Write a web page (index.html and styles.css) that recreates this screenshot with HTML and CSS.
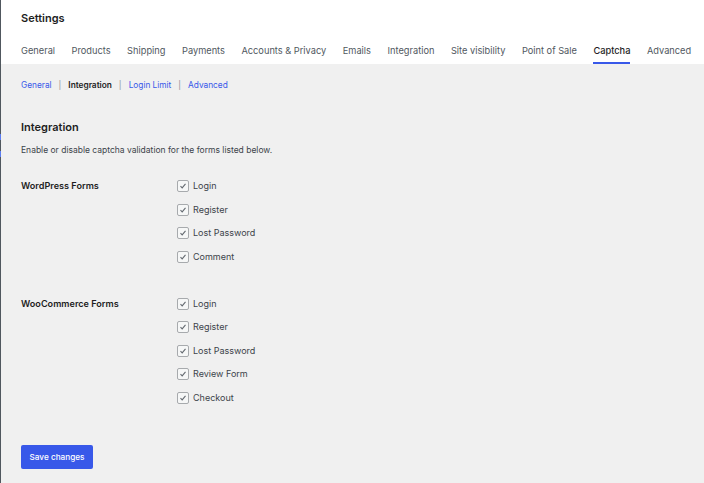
FILE: index.html
```html
<!DOCTYPE html>
<html>
<head>
    <title>Settings - Captcha</title>
    <link rel="stylesheet" href="styles.css">
</head>
<body>
    <div class="edge">
        <span class="edge-mark first"></span>
        <span class="edge-mark second"></span>
    </div>

    <div class="header">
        <h1>Settings</h1>
        <nav class="tabs">
            <a href="#">General</a>
            <a href="#">Products</a>
            <a href="#">Shipping</a>
            <a href="#">Payments</a>
            <a href="#">Accounts &amp; Privacy</a>
            <a href="#">Emails</a>
            <a href="#">Integration</a>
            <a href="#">Site visibility</a>
            <a href="#">Point of Sale</a>
            <a href="#" class="active">Captcha</a>
            <a href="#">Advanced</a>
        </nav>
    </div>

    <div class="content">
        <ul class="subtabs">
            <li><a href="#">General</a></li>
            <li class="sep">|</li>
            <li class="current">Integration</li>
            <li class="sep">|</li>
            <li><a href="#">Login Limit</a></li>
            <li class="sep">|</li>
            <li><a href="#">Advanced</a></li>
        </ul>

        <h2>Integration</h2>
        <p class="desc">Enable or disable captcha validation for the forms listed below.</p>

        <div class="form-row">
            <div class="row-label">WordPress Forms</div>
            <div class="options">
                <label class="check"><span class="box"><svg viewBox="0 0 12 12"><path d="M3 6.2l2 2.1 4-4.8" /></svg></span>Login</label>
                <label class="check"><span class="box"><svg viewBox="0 0 12 12"><path d="M3 6.2l2 2.1 4-4.8" /></svg></span>Register</label>
                <label class="check"><span class="box"><svg viewBox="0 0 12 12"><path d="M3 6.2l2 2.1 4-4.8" /></svg></span>Lost Password</label>
                <label class="check"><span class="box"><svg viewBox="0 0 12 12"><path d="M3 6.2l2 2.1 4-4.8" /></svg></span>Comment</label>
            </div>
        </div>

        <div class="form-row">
            <div class="row-label">WooCommerce Forms</div>
            <div class="options">
                <label class="check"><span class="box"><svg viewBox="0 0 12 12"><path d="M3 6.2l2 2.1 4-4.8" /></svg></span>Login</label>
                <label class="check"><span class="box"><svg viewBox="0 0 12 12"><path d="M3 6.2l2 2.1 4-4.8" /></svg></span>Register</label>
                <label class="check"><span class="box"><svg viewBox="0 0 12 12"><path d="M3 6.2l2 2.1 4-4.8" /></svg></span>Lost Password</label>
                <label class="check"><span class="box"><svg viewBox="0 0 12 12"><path d="M3 6.2l2 2.1 4-4.8" /></svg></span>Review Form</label>
                <label class="check"><span class="box"><svg viewBox="0 0 12 12"><path d="M3 6.2l2 2.1 4-4.8" /></svg></span>Checkout</label>
            </div>
        </div>

        <button class="save">Save changes</button>
    </div>
</body>
</html>
```

FILE: styles.css
```css
body {
    margin: 0;
    background: #f0f0f0;
    font-family: Inter, "Noto Sans", sans-serif;
    color: #1e1e1e;
    border-left: 1px solid #50575e;
    min-height: 483px;
    box-sizing: border-box;
}
.edge {
    position: absolute;
    left: 0;
    top: 0;
}
.edge-mark {
    position: absolute;
    left: 0;
    width: 1px;
    height: 6px;
    background: #5b7cf0;
}
.edge-mark.first {
    top: 134px;
}
.edge-mark.second {
    top: 151px;
}
.header {
    background: #fff;
    padding: 0 20px;
}
.header h1 {
    margin: 0;
    padding: 12px 0 0;
    font-size: 11px;
    font-weight: 600;
    line-height: 13px;
}
.tabs {
    display: flex;
    gap: 16.5px;
    margin-top: 20px;
    white-space: nowrap;
}
.tabs a {
    color: #50575e;
    text-decoration: none;
    font-size: 9.25px;
    line-height: 12px;
    padding-bottom: 5px;
    border-bottom: 2px solid transparent;
}
.tabs a.active {
    color: #1e1e1e;
    font-weight: 500;
    border-bottom-color: #3858e9;
}
.content {
    padding: 15px 20px 20px;
}
.subtabs {
    display: flex;
    gap: 7px;
    list-style: none;
    margin: 0;
    padding: 0;
    font-size: 8.3px;
    line-height: 12px;
}
.subtabs a {
    color: #3858e9;
    text-decoration: none;
}
.subtabs .sep {
    color: #8c8f94;
}
.subtabs .current {
    font-weight: 600;
    color: #1e1e1e;
}
.content h2 {
    font-size: 11px;
    font-weight: 600;
    margin: 29px 0 0;
    line-height: 14px;
}
.desc {
    margin: 10px 0 0;
    font-size: 8.5px;
    line-height: 12px;
    color: #3c434a;
}
.form-row {
    display: flex;
    margin-top: 24px;
}
.form-row + .form-row {
    margin-top: 35px;
}
.row-label {
    width: 156px;
    font-size: 9.1px;
    font-weight: 600;
    line-height: 12px;
}
.options {
    display: flex;
    flex-direction: column;
    gap: 11.5px;
}
.check {
    display: flex;
    align-items: center;
    gap: 4px;
    font-size: 9px;
    line-height: 12px;
    color: #3c434a;
}
.box {
    width: 10px;
    height: 10px;
    border: 1px solid #a7aaad;
    border-radius: 2px;
    background: #f6f7f7;
    display: flex;
}
.box svg {
    width: 10px;
    height: 10px;
    fill: none;
    stroke: #646970;
    stroke-width: 1.3;
}
.save {
    display: block;
    margin-top: 41px;
    background: #3858e9;
    color: #fff;
    border: none;
    border-radius: 2px;
    width: 72px;
    height: 24px;
    font-family: Inter, "Noto Sans", sans-serif;
    font-size: 8.2px;
    font-weight: 500;
    padding: 0;
    cursor: pointer;
}
```
